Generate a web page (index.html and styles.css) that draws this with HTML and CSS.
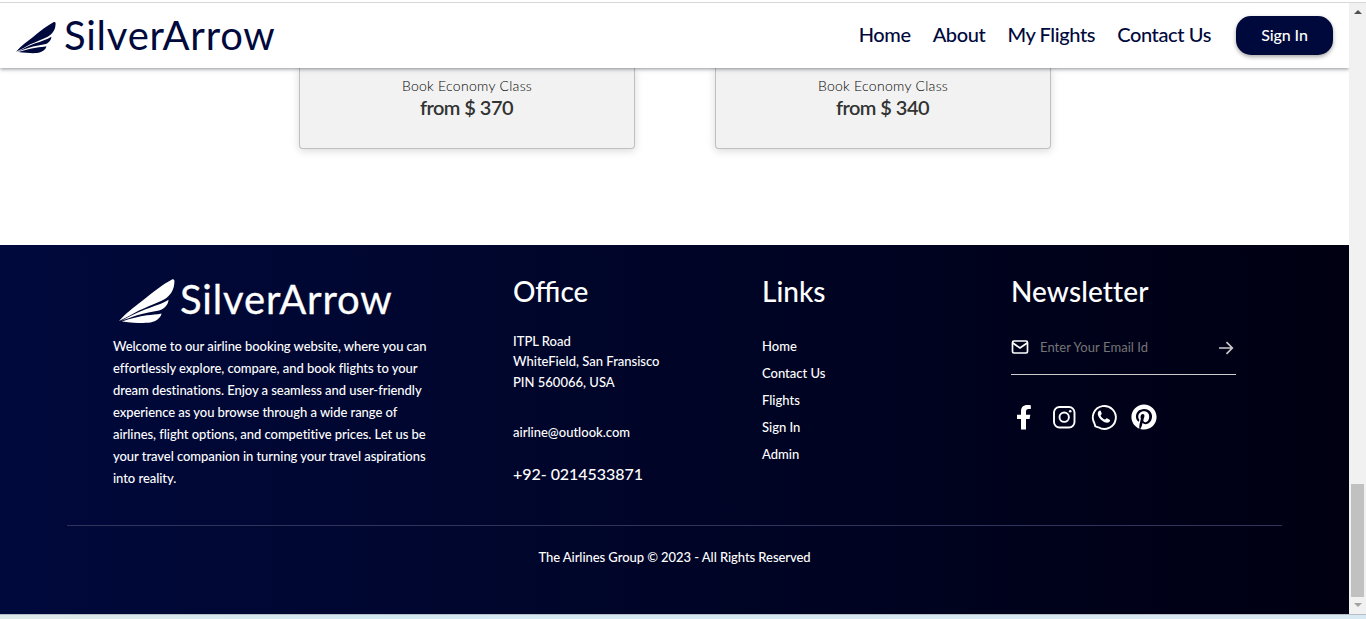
FILE: index.html
```html
<!DOCTYPE html>
<html lang="en">
<head>
<meta charset="utf-8">
<title>SilverArrow</title>
<link rel="stylesheet" href="styles.css">
</head>
<body>
<svg class="defs" aria-hidden="true">
  <symbol id="wing" viewBox="0 0 56 44">
    <path d="M0 42 C7 34 14 29 23 22 C34 13 44 5 53 .4 C55 -.3 55.600 1 55.400 3 C55.200 10 52 16.500 45 20.500 C37 24.500 30 27 20 31.500 C13 35 7 39 0 42Z"/>
    <path d="M2 42 C10 37.500 18 33.500 26 30.500 C36 26.800 43 25 49.500 20.800 C49.500 25 46 30 40 31.500 C33 33 26 33.700 18 36.300 C12 38.200 7 40.300 2 42Z"/>
    <path d="M3 42.400 C12 39.500 20 37.500 28 36.300 C33 35.600 38 35.500 42.500 34.400 C42 39 36 43.300 29 43.800 C22 44.200 14 43.700 3 42.400Z"/>
  </symbol>
</svg>
<div class="window">
  <div class="page">
    <header class="navbar">
      <a class="brand"><svg class="brand-wing"><use href="#wing"/></svg><span class="brand-name">SilverArrow</span></a>
      <nav class="menu"><a>Home</a><a>About</a><a>My Flights</a><a>Contact Us</a></nav>
      <button class="signin">Sign In</button>
    </header>
    <main class="cards">
      <article class="card"><p class="card-label">Book Economy Class</p><p class="card-price">from $ 370</p></article>
      <article class="card"><p class="card-label">Book Economy Class</p><p class="card-price">from $ 340</p></article>
    </main>
    <footer class="footer">
      <div class="footer-row">
        <section class="about">
          <div class="footer-brand"><svg class="footer-wing"><use href="#wing"/></svg><span class="footer-name">SilverArrow</span></div>
          <p class="about-text">Welcome to our airline booking website, where you can<br>effortlessly explore, compare, and book flights to your<br>dream destinations. Enjoy a seamless and user-friendly<br>experience as you browse through a wide range of<br>airlines, flight options, and competitive prices. Let us be<br>your travel companion in turning your travel aspirations<br>into reality.</p>
        </section>
        <section class="office">
          <h3>Office</h3>
          <p class="address">ITPL Road<br>WhiteField, San Fransisco<br>PIN 560066, USA</p>
          <p class="email">airline@outlook.com</p>
          <h4 class="phone">+92- 0214533871</h4>
        </section>
        <section class="links">
          <h3>Links</h3>
          <ul><li>Home</li><li>Contact Us</li><li>Flights</li><li>Sign In</li><li>Admin</li></ul>
        </section>
        <section class="newsletter">
          <h3>Newsletter</h3>
          <form class="subscribe">
            <svg class="mail" viewBox="0 0 18 14"><rect x="1.500" y="1" width="15" height="12" rx="1.500"/><path d="M1.500 2.800 9 8l7.500-5.200"/></svg>
            <input type="email" placeholder="Enter Your Email Id">
            <svg class="arrow" viewBox="0 0 16 14"><path d="M1 7H14M8.500 1.200 14.300 7 8.500 12.800"/></svg>
          </form>
          <div class="social">
            <svg viewBox="0 0 26 26"><path fill="#fff" d="M10 25.500V15H6v-4.300h4V7.200C10 3.100 12.400.9 16.200.9c1.600 0 3 .2 3.600.3v3.700h-2.200c-2 0-2.600 1-2.600 2.500v3.300h4.300l-.7 4.300H15v10.500z"/></svg>
            <svg viewBox="0 0 26 26" class="outline"><rect x="3" y="3" width="20.500" height="20.500" rx="5.500"/><circle cx="13.200" cy="13.200" r="4.700"/><circle cx="19.200" cy="7.300" r="1.300" class="solid"/></svg>
            <svg viewBox="0 0 26 26" class="outline"><path d="M3.500 19.400A11.500 11.500 0 1 1 7.400 23.300M3.500 19.400 4.300 22.300 7.400 23.300"/><path class="solid" d="M9.300 6.600c-.5-.2-1.100 0-1.500.5-2.800 3.300.8 7.500 3.200 9.500 2.500 2 5.500 3.100 7.200 1.500.8-.7 1-1.800.7-2.200-.5-.5-2.500-1.500-3.200-1.600-.8 0-1.200 1.400-1.900 1.300-1.600-.6-3.400-2.200-4.200-3.900-.1-.7 1.100-1.200 1.100-2 0-.6-.9-2.800-1.400-3.100z"/></svg>
            <svg viewBox="0 0 496 512"><path fill="#fff" d="M496 256c0 137-111 248-248 248-25.600 0-50.200-3.900-73.400-11.100 10.100-16.500 25.200-43.500 30.800-65 3-11.600 15.400-59 15.400-59 8.100 15.400 31.700 28.500 56.800 28.500 74.800 0 128.700-68.800 128.700-154.300 0-81.900-66.900-143.200-152.900-143.200-107 0-163.900 71.800-163.900 150.100 0 36.400 19.400 81.700 50.300 96.100 4.700 2.200 7.200 1.200 8.300-3.300.8-3.400 5-20.300 6.900-28.100.6-2.500.3-4.700-1.700-7.100-10.100-12.500-18.300-35.300-18.300-56.600 0-54.700 41.400-107.600 112-107.600 60.900 0 103.600 41.500 103.600 100.900 0 67.100-33.900 113.600-78 113.600-24.300 0-42.600-20.100-36.700-44.800 7-29.500 20.500-61.300 20.500-82.600 0-19-10.200-34.900-31.400-34.900-24.900 0-44.900 25.700-44.900 60.200 0 22 7.400 36.800 7.400 36.800s-24.500 103.800-29 123.200c-5 21.400-3 51.600-.9 71.200C65.400 450.900 0 361.100 0 256 0 119 111 8 248 8s248 111 248 248z"/></svg>
          </div>
        </section>
      </div>
      <hr class="rule">
      <p class="copyright">The Airlines Group © 2023 - All Rights Reserved</p>
    </footer>
  </div>
  <div class="scrollbar"><i class="up"></i><i class="thumb"></i><i class="down"></i></div>
</div>
<div class="taskbar"></div>
</body>
</html>
```
FILE: styles.css
```css
* { box-sizing: border-box; margin: 0; padding: 0; }
body { height: 619px; overflow: hidden; background: #fff; font-family: Lato, sans-serif; border-top: 2px solid #fff; }
.defs { display: none; }
svg { display: block; flex: none; overflow: visible; }
.window { display: flex; height: 612px; border-top: 1px solid #d5d7d9; }
.page { width: 1349px; height: 611px; overflow: hidden; }
.navbar { position: relative; display: flex; align-items: center; height: 65px; padding: 0 16px; background: #fff; box-shadow: 0 1px 4px rgba(40,50,60,.55); color: #00093c; }
.brand { display: flex; align-items: center; }
.brand-wing { width: 40px; height: 33px; margin-top: 3px; fill: #00093c; }
.brand-name { margin: -2px 0 0 8px; font-size: 40px; line-height: 48px; letter-spacing: .75px; }
.menu { display: flex; gap: 22px; margin: -3px 0 0 auto; font-size: 20px; font-weight: 500; letter-spacing: -.38px; }
.signin { width: 97px; height: 39px; margin-left: 25px; padding-bottom: 2px; border: 0; border-radius: 15px; background: #00093c; color: #fff; font: 500 16px Lato, sans-serif; letter-spacing: -.1px; box-shadow: 0 2px 4px rgba(0,0,0,.35); }
.cards { display: flex; gap: 80px; height: 177px; padding-left: 299px; }
.card { width: 336px; height: 81px; padding-top: 8px; border: 1px solid #c0c0c0; border-top: 0; border-radius: 0 0 4px 4px; background: #f2f2f2; box-shadow: 0 2px 8px rgba(0,0,0,.15); text-align: center; color: #333; }
.card-label { font-size: 14px; line-height: 20px; font-weight: 300; letter-spacing: .28px; color: #000; }
.card-price { margin: -1px 1px 0 0; font-size: 20px; font-weight: 600; line-height: 24px; letter-spacing: -.55px; }
.footer { height: 369px; padding: 28px 67px 0; background: linear-gradient(to right, #00093c, #000012); color: #fff; font-size: 13px; font-weight: 500; }
.footer-row { display: flex; height: 252px; padding-left: 46px; }
.about { width: 400px; }
.office, .links { width: 249px; }
.footer-brand { display: flex; height: 62px; padding: 6px 0 0 6px; }
.footer-wing { width: 56px; height: 44px; fill: #fff; }
.footer-name { margin: -1px 0 0 5px; font-size: 40px; font-weight: 400; line-height: 42px; letter-spacing: .85px; -webkit-text-stroke: .3px #fff; }
.about-text { line-height: 22px; white-space: nowrap; letter-spacing: -.05px; }
h3 { font-size: 28px; font-weight: 500; line-height: 36px; }
.newsletter h3 { letter-spacing: .1px; }
.address { margin-top: 22px; line-height: 20.400px; }
.email { margin-top: 30px; line-height: 20px; }
.phone { margin-top: 21px; font-size: 16px; font-weight: 500; line-height: 22px; letter-spacing: -.04px; }
.links ul { margin-top: 24px; list-style: none; line-height: 27px; }
.subscribe { display: flex; align-items: center; width: 225px; height: 43px; margin-top: 23px; border-bottom: 1px solid #ccc; }
.mail { width: 18px; height: 14px; margin-top: -12px; fill: none; stroke: #fff; stroke-width: 1.700; }
.subscribe input { width: 180px; margin: -12px 0 0 11px; border: 0; background: transparent; font: 13px Lato, sans-serif; letter-spacing: .06px; }
.subscribe input::placeholder { color: #757575; }
.arrow { width: 16px; height: 14px; margin: -10px 0 0 -2px; fill: none; stroke: #ccc; stroke-width: 1.700; }
.social { display: flex; gap: 14px; margin: 29px 0 0 -.3px; }
.social svg { width: 26px; height: 26px; }
.outline { fill: none; stroke: #fff; stroke-width: 1.900; }
.outline .solid { fill: #fff; stroke: none; }
.rule { height: 1px; border: 0; background: #30345a; }
.copyright { margin-top: 21px; line-height: 20px; text-align: center; letter-spacing: -.06px; }
.scrollbar { display: flex; flex-direction: column; align-items: center; width: 17px; height: 611px; background: #f1f1f1; }
.up { margin-top: 7px; border: 4px solid transparent; border-top: 0; border-bottom-color: #505050; }
.thumb { width: 13px; height: 113px; margin-top: 470px; background: #c1c1c1; }
.down { margin-top: 6px; border: 4px solid transparent; border-bottom: 0; border-top-color: #a3a3a3; }
.taskbar { height: 5px; border-top: 1px solid #b7bdc4; background: linear-gradient(to right, #dfe9e9, #d3e9f2 25%, #d9e9f4); }
```
